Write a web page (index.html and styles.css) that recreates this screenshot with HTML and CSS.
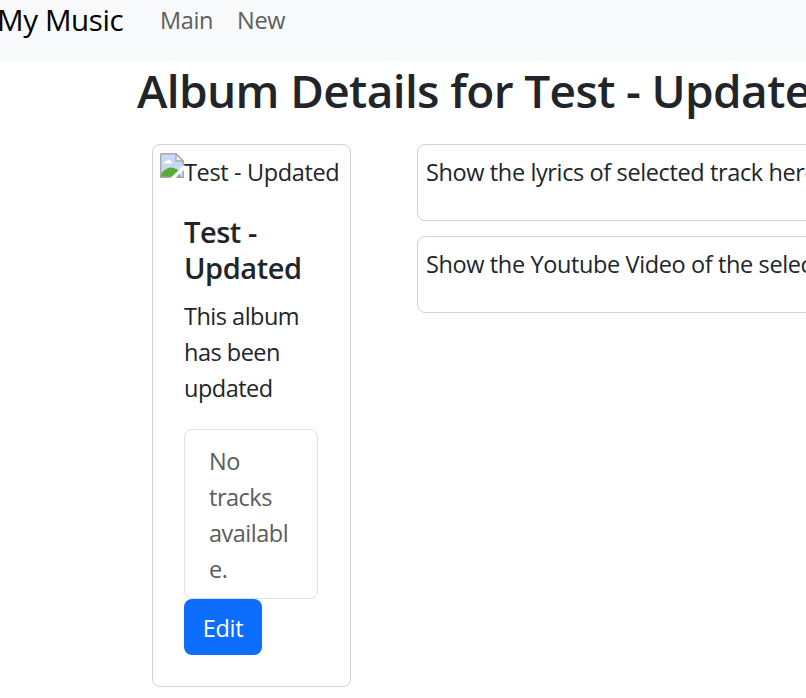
FILE: index.html
```html
<!DOCTYPE html>
<html lang="en">
<head>
<meta charset="utf-8">
<title>My Music</title>
<link rel="stylesheet" href="styles.css">
</head>
<body>
<nav class="navbar">
  <a class="brand">My Music</a>
  <a class="nav-link">Main</a>
  <a class="nav-link">New</a>
</nav>
<main class="container">
  <h1>Album Details for Test - Updated</h1>
  <div class="row">
    <section class="card album">
      <div class="cover">
        <svg class="broken" viewBox="0 0 24 25" width="24" height="25">
          <path d="M1 1H16L23 8V24H1Z" fill="#c6d7f7"/>
          <path d="M3.5 10.5Q4 8 6.2 8.3Q7.5 5.5 9.8 7Q12 7.5 12 10.5Z" fill="#fff"/>
          <path d="M1 24V21Q5 15 11 14.5Q17 15 20 19V24Z" fill="#55ad35"/>
          <path d="M.7 24.3V2Q.7.7 2 .7H16L23.3 8V24.3Z" fill="none" stroke="#a9a9a9" stroke-width="1.4"/>
          <path d="M16 1V8H23Z" fill="#f4f4f4" stroke="#a9a9a9" stroke-width="1.3"/>
          <path d="M10.5 25L24 12V17L15.5 25Z" fill="#fff"/>
        </svg>
        <span class="alt">Test - Updated</span>
      </div>
      <div class="card-body">
        <h5>Test - Updated</h5>
        <p>This album has been updated</p>
        <div class="list-item">No tracks availabl<wbr>e.</div>
        <a class="btn">Edit</a>
      </div>
    </section>
    <div class="panels">
      <section class="card panel">Show the lyrics of selected track here</section>
      <section class="card panel">Show the Youtube Video of the selected track here</section>
    </div>
  </div>
</main>
</body>
</html>
```
FILE: styles.css
```css
* { box-sizing: border-box; }
body {
  margin: 0;
  overflow: hidden;
  background: #fff;
  color: #212529;
  font: 23.5px/36px "Open Sans", "Noto Sans", sans-serif;
  letter-spacing: -.36px;
}
.navbar {
  display: flex;
  align-items: flex-start;
  height: 61px;
  padding-top: 2px;
  background: #f8f9fa;
}
.brand {
  width: 160px;
  margin-left: -3px;
  color: #000;
  font-size: 29.5px;
}
.nav-link {
  margin-right: 24px;
  color: #5d5e5f;
}
.nav-link:nth-child(2) { margin-left: 3px; }
.container { width: 1100px; margin-left: 137px; }
h1 {
  height: 83px;
  margin: 0;
  font-size: 46px;
  font-weight: 600;
  letter-spacing: -.63px;
  line-height: 58px;
  white-space: nowrap;
}
.row {
  display: flex;
  align-items: flex-start;
  gap: 66px;
  padding-left: 15px;
}
.card {
  background: #fff;
  border: 1px solid #d1d2d2;
  border-radius: 8px;
}
.album { width: 199px; height: 543px; padding: 8px 7px; }
.cover { display: flex; height: 36px; white-space: nowrap; }
.broken { flex: none; }
.alt { padding-top: 1px; }
.card-body { padding: 25px 24px 0; }
h5 {
  margin: 0 0 12px;
  font-size: 29px;
  font-weight: 600;
  letter-spacing: -.45px;
  line-height: 36px;
}
p { margin: 0 0 23px; letter-spacing: -.5px; }
.list-item {
  width: 134px;
  height: 170px;
  padding: 13px 24px;
  border: 1px solid #dee2e6;
  border-radius: 8px;
  color: #5a5c5e;
  letter-spacing: -.5px;
}
.btn {
  display: block;
  width: 78px;
  height: 56px;
  padding-top: 11px;
  border-radius: 8px;
  background: #0d6efd;
  color: #fff;
  text-align: center;
}
.panels { display: grid; gap: 15px; width: 700px; }
.panel { height: 77px; padding: 9px 8px; letter-spacing: -.38px; }
```
